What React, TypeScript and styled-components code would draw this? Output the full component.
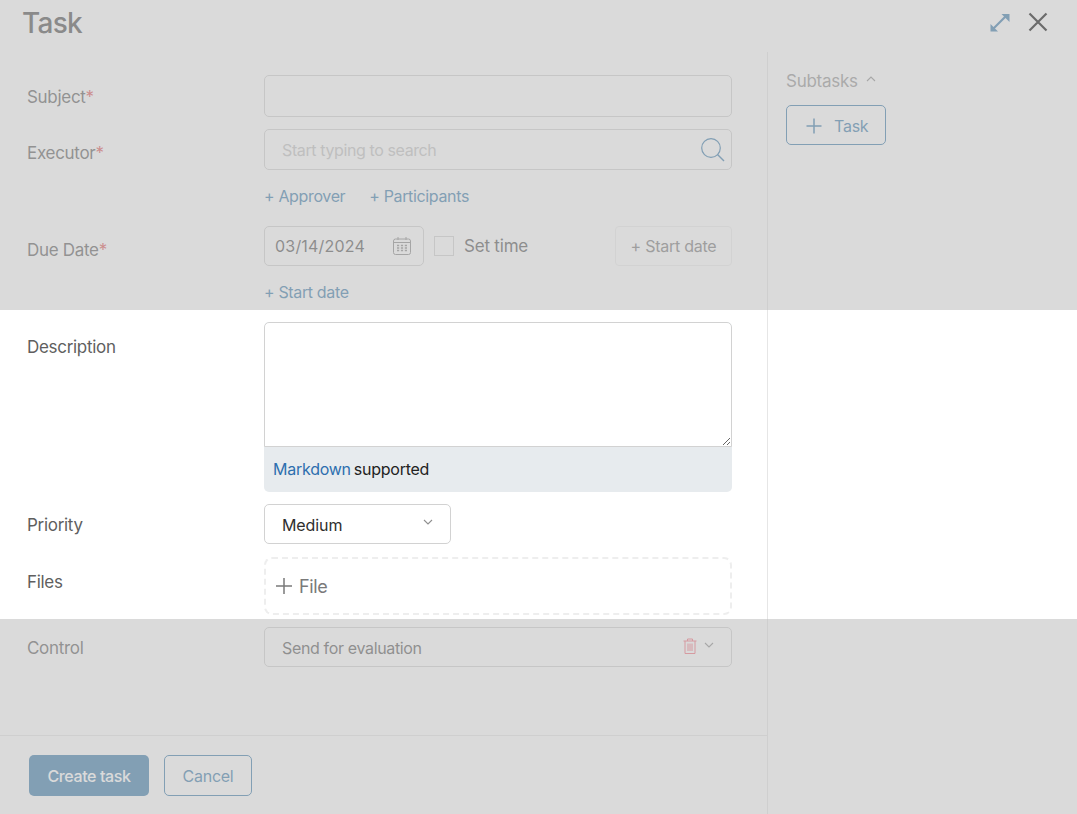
import React from "react";
import styled, { createGlobalStyle } from "styled-components";

const Global = createGlobalStyle`
  html, body { margin: 0; padding: 0; background: #fff; }
  body { font-family: Inter, "Liberation Sans", sans-serif; overflow: hidden; }
  * { box-sizing: border-box; }
`;

const Page = styled.div`
  position: relative;
  width: 1077px;
  height: 814px;
  overflow: hidden;
  background: #fff;
  display: flex;
  flex-direction: column;
`;
const Shade = styled.div<{ $top: number; $height: number }>`
  position: absolute;
  left: 0;
  right: 0;
  top: ${(p) => p.$top}px;
  height: ${(p) => p.$height}px;
  background: rgba(188, 188, 188, 0.55);
  backdrop-filter: blur(0.5px);
  pointer-events: none;
`;
const Header = styled.header`
  height: 52px;
  flex: none;
  display: flex;
  align-items: flex-start;
  justify-content: space-between;
  padding: 4px 28px 0 22px;
`;
const Title = styled.h1`
  margin: 0;
  font-size: 28px;
  line-height: 38px;
  font-weight: 500;
  color: #4e4e4e;
  letter-spacing: -0.7px;
`;
const HeaderTools = styled.div`
  display: flex;
  align-items: center;
  gap: 16px;
  height: 36px;
`;
const IconButton = styled.button`
  border: 0;
  padding: 0;
  background: none;
  display: flex;
`;
const Body = styled.div`
  flex: 1;
  display: flex;
  min-height: 0;
`;
const Main = styled.main`
  width: 768px;
  flex: none;
  border-right: 1px solid #e6e6e6;
  display: flex;
  flex-direction: column;
`;
const Form = styled.div`
  flex: 1;
  padding: 23px 0 0 27px;
  display: flex;
  flex-direction: column;
`;
const Row = styled.div<{ $mt?: number }>`
  display: grid;
  grid-template-columns: 237px 468px;
  margin-top: ${(p) => p.$mt ?? 0}px;
`;
const Label = styled.label<{ $pad: number }>`
  padding-top: ${(p) => p.$pad}px;
  font-size: 17px;
  line-height: 24px;
  letter-spacing: -0.3px;
  color: #5f5f5f;
`;
const Req = styled.span`
  color: #e05555;
`;
const TextBox = styled.input<{ $h: number }>`
  display: block;
  width: 100%;
  height: ${(p) => p.$h}px;
  border: 1px solid #d2d2d2;
  border-radius: 5px;
  background: #fff;
  outline: none;
  font: inherit;
`;
const SearchBox = styled.div`
  height: 41px;
  border: 1px solid #d2d2d2;
  border-radius: 5px;
  padding: 0 6px 0 17px;
  display: flex;
  align-items: center;
  justify-content: space-between;
`;
const Placeholder = styled.span`
  font-size: 16px;
  letter-spacing: -0.39px;
  color: #c3c3c3;
`;
const Links = styled.div`
  height: 26px;
  display: flex;
  gap: 24px;
  align-items: center;
`;
const LinkText = styled.a`
  font-size: 16px;
  letter-spacing: -0.35px;
  color: #3c7cab;
`;
const DateLine = styled.div`
  display: flex;
  align-items: center;
  height: 40px;
`;
const DateBox = styled.div`
  width: 160px;
  height: 40px;
  border: 1px solid #d2d2d2;
  border-radius: 5px;
  padding: 0 11px 0 10px;
  display: flex;
  align-items: center;
  justify-content: space-between;
  font-size: 16px;
  letter-spacing: 0.2px;
  color: #555;
`;
const Check = styled.span`
  width: 20px;
  height: 20px;
  margin-left: 10px;
  border: 1px solid #d2d2d2;
  flex: none;
`;
const CheckText = styled.span`
  margin-left: 10px;
  font-size: 17px;
  letter-spacing: -0.2px;
  color: #555;
`;
const GhostButton = styled.button`
  margin-left: auto;
  width: 117px;
  height: 40px;
  border: 1px solid #eeeeee;
  border-radius: 4px;
  background: none;
  font: inherit;
  font-size: 16px;
  letter-spacing: -0.25px;
  color: #7a7a7a;
  padding: 0;
`;
const Editor = styled.div`
  height: 170px;
  display: flex;
  flex-direction: column;
  border-radius: 5px;
  overflow: hidden;
  background: #e7ebee;
`;
const Area = styled.textarea`
  display: block;
  width: 100%;
  height: 125px;
  flex: none;
  resize: vertical;
  border: 1px solid #d2d2d2;
  border-radius: 5px 5px 0 0;
  background: #fff;
  outline: none;
  margin: 0;
`;
const EditorNote = styled.div`
  padding: 0 9px 2px;
  flex: 1;
  display: flex;
  align-items: center;
  gap: 3px;
  font-size: 16px;
  letter-spacing: -0.25px;
  color: #222;
`;
const NoteLink = styled.a`
  color: #2d6fae;
`;
const Select = styled.div<{ $w?: number }>`
  width: ${(p) => (p.$w ? `${p.$w}px` : "100%")};
  height: 40px;
  border: 1px solid #d2d2d2;
  border-radius: 5px;
  padding: 0 17px 0 17px;
  display: flex;
  align-items: center;
  justify-content: space-between;
`;
const SelectText = styled.span<{ $muted?: boolean }>`
  padding-top: 1px;
  font-size: 16px;
  letter-spacing: ${(p) => (p.$muted ? "-0.35px" : "-0.1px")};
  color: ${(p) => (p.$muted ? "#5a5a5a" : "#2e2e2e")};
`;
const SelectTools = styled.span`
  display: flex;
  align-items: center;
  gap: 7px;
`;
const TrashIcon = styled.svg`
  margin-top: -2px;
`;
const ChevronIcon = styled.svg`
  margin-top: -5px;
`;
const Drop = styled.div`
  height: 58px;
  border: 2px dashed #eeeeee;
  border-radius: 8px;
  padding: 0 0 0 9px;
  display: flex;
  align-items: center;
  gap: 6px;
  font-size: 18px;
  letter-spacing: -0.35px;
  color: #7a7a7a;
`;
const Footer = styled.footer`
  height: 79px;
  flex: none;
  border-top: 1px solid #e6e6e6;
  padding: 19px 0 0 29px;
  display: flex;
  align-items: flex-start;
  gap: 15px;
`;
const Primary = styled.button`
  width: 120px;
  height: 41px;
  border: 0;
  border-radius: 5px;
  background: #3c7cab;
  color: #fff;
  font: inherit;
  font-size: 16px;
  font-weight: 500;
  letter-spacing: -0.4px;
  padding: 0;
`;
const Secondary = styled.button`
  width: 88px;
  height: 41px;
  border: 1px solid #3c7cab;
  border-radius: 5px;
  background: none;
  color: #3c7cab;
  font: inherit;
  font-size: 16px;
  letter-spacing: -0.25px;
  padding: 0;
`;
const Side = styled.aside`
  flex: 1;
  padding: 17px 0 0 18px;
`;
const SideTitle = styled.div`
  display: flex;
  align-items: center;
  gap: 8px;
  height: 24px;
  font-size: 17px;
  letter-spacing: -0.25px;
  color: #959595;
`;
const AddTask = styled.button`
  margin-top: 12px;
  width: 100px;
  height: 40px;
  border: 1px solid #3c7cab;
  border-radius: 5px;
  background: none;
  padding: 2px 0 0 19px;
  display: flex;
  align-items: center;
  gap: 12px;
  font: inherit;
  font-size: 16px;
  letter-spacing: -0.25px;
  color: #3c7cab;
`;
const PlusIcon = styled.svg`
  margin-top: -1px;
`;

const Chevron = ({ up }: { up?: boolean }) => (
  <ChevronIcon width="10" height="6" viewBox="0 0 10 6" fill="none">
    <path d={up ? "M1 5l4-4 4 4" : "M1 1l4 4 4-4"} stroke="#8f8f8f" strokeWidth="1.1" />
  </ChevronIcon>
);

export default function App() {
  return (
    <Page>
      <Global />
      <Header>
        <Title>Task</Title>
        <HeaderTools>
          <IconButton aria-label="Expand">
            <svg width="23" height="23" viewBox="0 0 23 23" fill="none">
              <path d="M5 18L18 5" stroke="#3c7cab" strokeWidth="2.2" />
              <path d="M13.5 3H21.5V11Z" fill="#3c7cab" />
              <path d="M10 20.5H2.5V13Z" fill="#3c7cab" />
            </svg>
          </IconButton>
          <IconButton aria-label="Close">
            <svg width="22" height="22" viewBox="0 0 22 22" fill="none">
              <path d="M2.5 2.5L19.5 19.5M19.5 2.5L2.5 19.5" stroke="#0a0a0a" strokeWidth="2.2" />
            </svg>
          </IconButton>
        </HeaderTools>
      </Header>
      <Body>
        <Main>
          <Form>
            <Row>
              <Label $pad={10}>Subject<Req>*</Req></Label>
              <TextBox $h={42} />
            </Row>
            <Row $mt={12}>
              <Label $pad={12}>Executor<Req>*</Req></Label>
              <SearchBox>
                <Placeholder>Start typing to search</Placeholder>
                <svg width="24" height="24" viewBox="0 0 24 24" fill="none">
                  <circle cx="10" cy="10" r="9.3" stroke="#3c7cab" strokeWidth="1.2" />
                  <path d="M16.5 16.5l6.5 6.5" stroke="#3c7cab" strokeWidth="1.4" />
                </svg>
              </SearchBox>
            </Row>
            <Row $mt={13}>
              <span />
              <Links>
                <LinkText>+ Approver</LinkText>
                <LinkText>+ Participants</LinkText>
              </Links>
            </Row>
            <Row $mt={17}>
              <Label $pad={12}>Due Date<Req>*</Req></Label>
              <DateLine>
                <DateBox>
                  03/14/2024
                  <svg width="20" height="20" viewBox="0 0 20 20" fill="none">
                    <rect x="1.5" y="3" width="17" height="15.5" rx="2" stroke="#8a8a8a" />
                    <path d="M2 6.5h16M6 1v3M14 1v3" stroke="#8a8a8a" />
                    <path d="M5 9.5h2.2M8.9 9.5h2.2M12.8 9.5h2.2M5 12h2.2M8.9 12h2.2M12.8 12h2.2M5 14.5h2.2M8.9 14.5h2.2M12.8 14.5h2.2" stroke="#8a8a8a" strokeWidth="1.3" />
                  </svg>
                </DateBox>
                <Check />
                <CheckText>Set time</CheckText>
                <GhostButton>+ Start date</GhostButton>
              </DateLine>
            </Row>
            <Row $mt={13}>
              <span />
              <Links>
                <LinkText>+ Start date</LinkText>
              </Links>
            </Row>
            <Row $mt={17}>
              <Label $pad={13}>Description</Label>
              <Editor>
                <Area />
                <EditorNote>
                  <NoteLink>Markdown</NoteLink> supported
                </EditorNote>
              </Editor>
            </Row>
            <Row $mt={12}>
              <Label $pad={9}>Priority</Label>
              <Select $w={187}>
                <SelectText>Medium</SelectText>
                <Chevron />
              </Select>
            </Row>
            <Row $mt={13}>
              <Label $pad={13}>Files</Label>
              <Drop>
                <svg width="18" height="18" viewBox="0 0 18 18" fill="none">
                  <path d="M9 1v16M1 9h16" stroke="#7a7a7a" strokeWidth="1.5" />
                </svg>
                File
              </Drop>
            </Row>
            <Row $mt={12}>
              <Label $pad={9}>Control</Label>
              <Select>
                <SelectText $muted>Send for evaluation</SelectText>
                <SelectTools>
                  <TrashIcon width="14" height="16" viewBox="0 0 14 16" fill="none">
                    <path d="M0.5 3h13M4.5 3V1h5v2M2 3v12.5h10V3M5 5.5v7.5M7 5.5v7.5M9 5.5v7.5" stroke="#f5717f" strokeWidth="1" />
                  </TrashIcon>
                  <Chevron />
                </SelectTools>
              </Select>
            </Row>
          </Form>
          <Footer>
            <Primary>Create task</Primary>
            <Secondary>Cancel</Secondary>
          </Footer>
        </Main>
        <Side>
          <SideTitle>
            Subtasks
            <Chevron up />
          </SideTitle>
          <AddTask>
            <PlusIcon width="16" height="16" viewBox="0 0 16 16" fill="none">
              <path d="M8 0.5v15M0.5 8h15" stroke="#3c7cab" strokeWidth="1.5" />
            </PlusIcon>
            Task
          </AddTask>
        </Side>
      </Body>
      <Shade $top={0} $height={310} />
      <Shade $top={619} $height={195} />
    </Page>
  );
}
